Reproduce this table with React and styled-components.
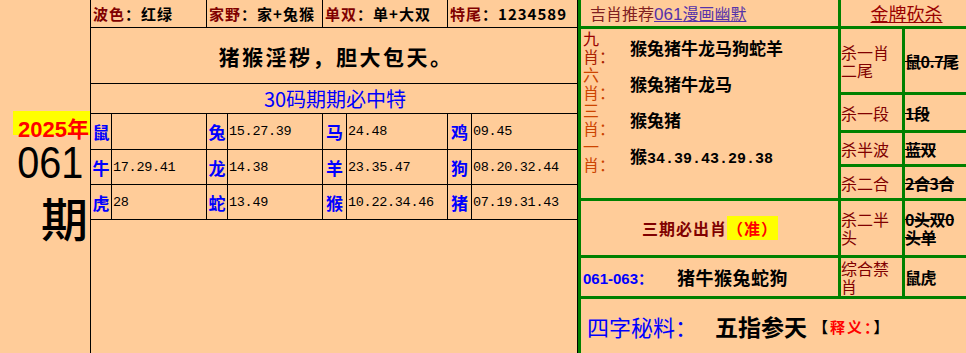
import React from "react";
import styled, { createGlobalStyle } from "styled-components";

const GlobalStyle = createGlobalStyle`
  body {
    margin: 0;
    background: #ffcc99;
    font-family: "Noto Sans CJK SC", sans-serif;
  }
`;

const Page = styled.div`
  display: flex;
  width: 966px;
  height: 353px;
  overflow: hidden;
  background: #ffcc99;
`;

/* left year column */
const YearCol = styled.div`
  width: 90px;
  flex-shrink: 0;
  display: flex;
  flex-direction: column;
  align-items: flex-end;
  padding-top: 111px;
  box-sizing: border-box;
`;

const YearTag = styled.div`
  width: 77px;
  height: 24px;
  line-height: 24px;
  background: #ffff00;
  color: #ff0000;
  font: bold 22px "Liberation Sans", "Noto Sans CJK SC", sans-serif;
  text-align: right;
  padding-right: 1px;
  box-sizing: border-box;
`;

const Issue = styled.div`
  margin-top: 6px;
  font: 44px/44px "Liberation Sans", sans-serif;
  color: #000;
  padding-right: 8px;
  transform: scaleX(0.9);
  transform-origin: right center;
`;

const IssueUnit = styled.div`
  margin-top: 8px;
  font-size: 47px;
  line-height: 48px;
  font-weight: 500;
  color: #000;
  padding-right: 2px;
`;

/* middle table */
const LeftPanel = styled.div`
  width: 488px;
  flex-shrink: 0;
  border-left: 1px solid #000;
  border-right: 1px solid #000;
  box-sizing: border-box;
`;

const Grid = styled.div`
  display: grid;
  grid-template-columns: 20px 94px 20px 94px 23px 100px 23px 105px;
  grid-template-rows: 27px 55px 29px 35px 34px 34px;
  gap: 1px;
  background: #000;
  border-bottom: 1px solid #000;
`;

const Cell = styled.div`
  background: #ffcc99;
  display: flex;
  align-items: center;
  white-space: nowrap;
  overflow: hidden;
`;

const InfoCell = styled(Cell)`
  grid-column: span 2;
  padding-left: 2px;
  font-size: 15px;
  font-weight: bold;
  letter-spacing: 1px;
  color: #000;
`;

const Label = styled.span`
  color: ${(p) => p.$color || "#800000"};
`;

const Slogan = styled(Cell)`
  grid-column: 1 / -1;
  justify-content: center;
  font-size: 21px;
  font-weight: bold;
  letter-spacing: 2.5px;
  padding-left: 4px;
`;

const Title = styled(Cell)`
  grid-column: 1 / -1;
  justify-content: center;
  color: #0000ff;
  font-size: 20px;
  padding-left: 2px;
`;

const Zodiac = styled(Cell)`
  justify-content: center;
  color: #0000ff;
  font-size: 17px;
  font-weight: bold;
`;

const Nums = styled(Cell)`
  font: 13.5px "Liberation Mono", monospace;
  color: #000;
  padding-left: 1px;
  letter-spacing: -0.3px;
`;

/* right green panel */
const RightPanel = styled.div`
  width: 388px;
  height: 353px;
  flex-shrink: 0;
  background: #008000;
  padding-left: 3px;
  box-sizing: border-box;
  display: grid;
  grid-template-columns: 257px 61px 61px;
  grid-template-rows: 26px 63px 35px 31px 31px 54px 38px 54px;
  gap: 3px;
`;

const Box = styled.div`
  background: #ffcc99;
  display: flex;
  align-items: center;
  overflow: hidden;
`;

const Recommend = styled(Box)`
  padding-left: 9px;
  font-size: 16px;
  color: #802020;
  white-space: nowrap;
`;

const RecLink = styled.span`
  color: #5533aa;
  text-decoration: underline;
`;

const RecNum = styled.span`
  font-family: "Liberation Sans", sans-serif;
  font-size: 17px;
`;

const KillHead = styled(Box)`
  grid-column: 2 / 4;
  justify-content: center;
  padding-left: 6px;
  font-size: 18px;
  color: #990000;
  text-decoration: underline;
`;

const PickBlock = styled(Box)`
  grid-row: 2 / 6;
  flex-direction: column;
  align-items: stretch;
  justify-content: flex-start;
`;

const PickRow = styled.div`
  display: flex;
  align-items: center;
  height: 36px;
`;

const PickLabel = styled.div`
  width: 47px;
  flex-shrink: 0;
  padding-left: 2px;
  font-size: 16px;
  line-height: 18px;
  color: ${(p) => p.$color};
  white-space: nowrap;
`;

const PickText = styled.div`
  font-size: 17px;
  font-weight: bold;
  color: #000;
  white-space: nowrap;
`;

const PickNums = styled.span`
  font: bold 15px "Liberation Mono", monospace;
`;

const KillLabel = styled(Box)`
  font-size: 16px;
  line-height: 18px;
  color: #800000;
`;

const KillValue = styled(Box)`
  font-size: 16px;
  line-height: 18px;
  font-weight: bold;
  color: #000;
  text-decoration: ${(p) => (p.$struck ? "line-through" : "none")};
  word-break: break-all;
  letter-spacing: -0.5px;
`;

const MustCell = styled(Box)`
  justify-content: center;
  font-size: 16px;
  font-weight: bold;
  color: #800000;
  letter-spacing: 1px;
  padding-left: 1px;
`;

const Accurate = styled.span`
  background: #ffff00;
  color: #ff0000;
`;

const RangeCell = styled(Box)`
  padding-left: 2px;
  white-space: nowrap;
`;

const Range = styled.span`
  font: bold 15px "Liberation Sans", "Noto Sans CJK SC", sans-serif;
  color: #0000ff;
  margin-right: 24px;
`;

const RangeText = styled.span`
  font-size: 18px;
  font-weight: bold;
  color: #000;
  letter-spacing: 0.5px;
`;

const SecretCell = styled(Box)`
  grid-column: 1 / -1;
  padding-left: 6px;
  white-space: nowrap;
`;

const SecretLabel = styled.span`
  font-size: 22px;
  color: #0000ff;
  margin-right: 18px;
`;

const SecretText = styled.span`
  font-size: 23px;
  font-weight: bold;
  color: #000;
`;

const Note = styled.span`
  font-size: 15px;
  font-weight: bold;
  color: #000;
  margin-left: 6px;
  letter-spacing: 2px;
`;

const NoteRed = styled.span`
  color: #ff0000;
`;

const info = [
  ["波色", "红绿"],
  ["家野", "家+兔猴"],
  ["单双", "单+大双"],
  ["特尾", "1234589"],
];

const zodiacRows = [
  [["鼠", ""], ["兔", "15.27.39"], ["马", "24.48"], ["鸡", "09.45"]],
  [["牛", "17.29.41"], ["龙", "14.38"], ["羊", "23.35.47"], ["狗", "08.20.32.44"]],
  [["虎", "28"], ["蛇", "13.49"], ["猴", "10.22.34.46"], ["猪", "07.19.31.43"]],
];

const picks = [
  { n: "九", color: "#990000", sub: "#aa2200", text: "猴兔猪牛龙马狗蛇羊" },
  { n: "六", color: "#cc4400", sub: "#cc4400", text: "猴兔猪牛龙马" },
  { n: "三", color: "#cc4400", sub: "#cc4400", text: "猴兔猪" },
  { n: "一", color: "#cc4400", sub: "#cc4400", text: "猴", nums: "34.39.43.29.38" },
];

const kills = [
  ["杀一肖", "二尾", "鼠0.7尾"],
  ["杀一段", null, "1段"],
  ["杀半波", null, "蓝双"],
  ["杀二合", null, "2合3合"],
];

export default function App() {
  return (
    <Page>
      <GlobalStyle />
      <YearCol>
        <YearTag>2025年</YearTag>
        <Issue>061</Issue>
        <IssueUnit>期</IssueUnit>
      </YearCol>

      <LeftPanel>
        <Grid>
          {info.map(([k, v]) => (
            <InfoCell key={k}>
              <Label>{k}</Label>：{v}
            </InfoCell>
          ))}
          <Slogan>猪猴淫秽，胆大包天。</Slogan>
          <Title>30码期期必中特</Title>
          {zodiacRows.map((row) =>
            row.map(([z, n]) => (
              <React.Fragment key={z}>
                <Zodiac>{z}</Zodiac>
                <Nums>{n}</Nums>
              </React.Fragment>
            ))
          )}
        </Grid>
      </LeftPanel>

      <RightPanel>
        <Recommend>
          吉肖推荐
          <RecLink>
            <RecNum>061</RecNum>漫画幽默
          </RecLink>
        </Recommend>
        <KillHead>金牌砍杀</KillHead>

        <PickBlock>
          {picks.map((p) => (
            <PickRow key={p.n}>
              <PickLabel $color={p.color}>
                {p.n}
                <br />
                <Label $color={p.sub}>肖：</Label>
              </PickLabel>
              <PickText>
                {p.text}
                {p.nums && <PickNums>{p.nums}</PickNums>}
              </PickText>
            </PickRow>
          ))}
        </PickBlock>

        {kills.map(([a, b, v]) => (
          <React.Fragment key={a}>
            <KillLabel>
              <span>
                {a}
                {b && <br />}
                {b}
              </span>
            </KillLabel>
            <KillValue $struck>{v}</KillValue>
          </React.Fragment>
        ))}

        <MustCell>
          三期必出肖<Accurate>（准）</Accurate>
        </MustCell>
        <KillLabel>
          <span>
            杀二半
            <br />头
          </span>
        </KillLabel>
        <KillValue $struck>0头双0头单</KillValue>

        <RangeCell>
          <Range>061-063：</Range>
          <RangeText>猪牛猴兔蛇狗</RangeText>
        </RangeCell>
        <KillLabel>
          <span>
            综合禁
            <br />肖
          </span>
        </KillLabel>
        <KillValue>鼠虎</KillValue>

        <SecretCell>
          <SecretLabel>四字秘料：</SecretLabel>
          <SecretText>五指参天</SecretText>
          <Note>
            【<NoteRed>释义：</NoteRed>】
          </Note>
        </SecretCell>
      </RightPanel>
    </Page>
  );
}
